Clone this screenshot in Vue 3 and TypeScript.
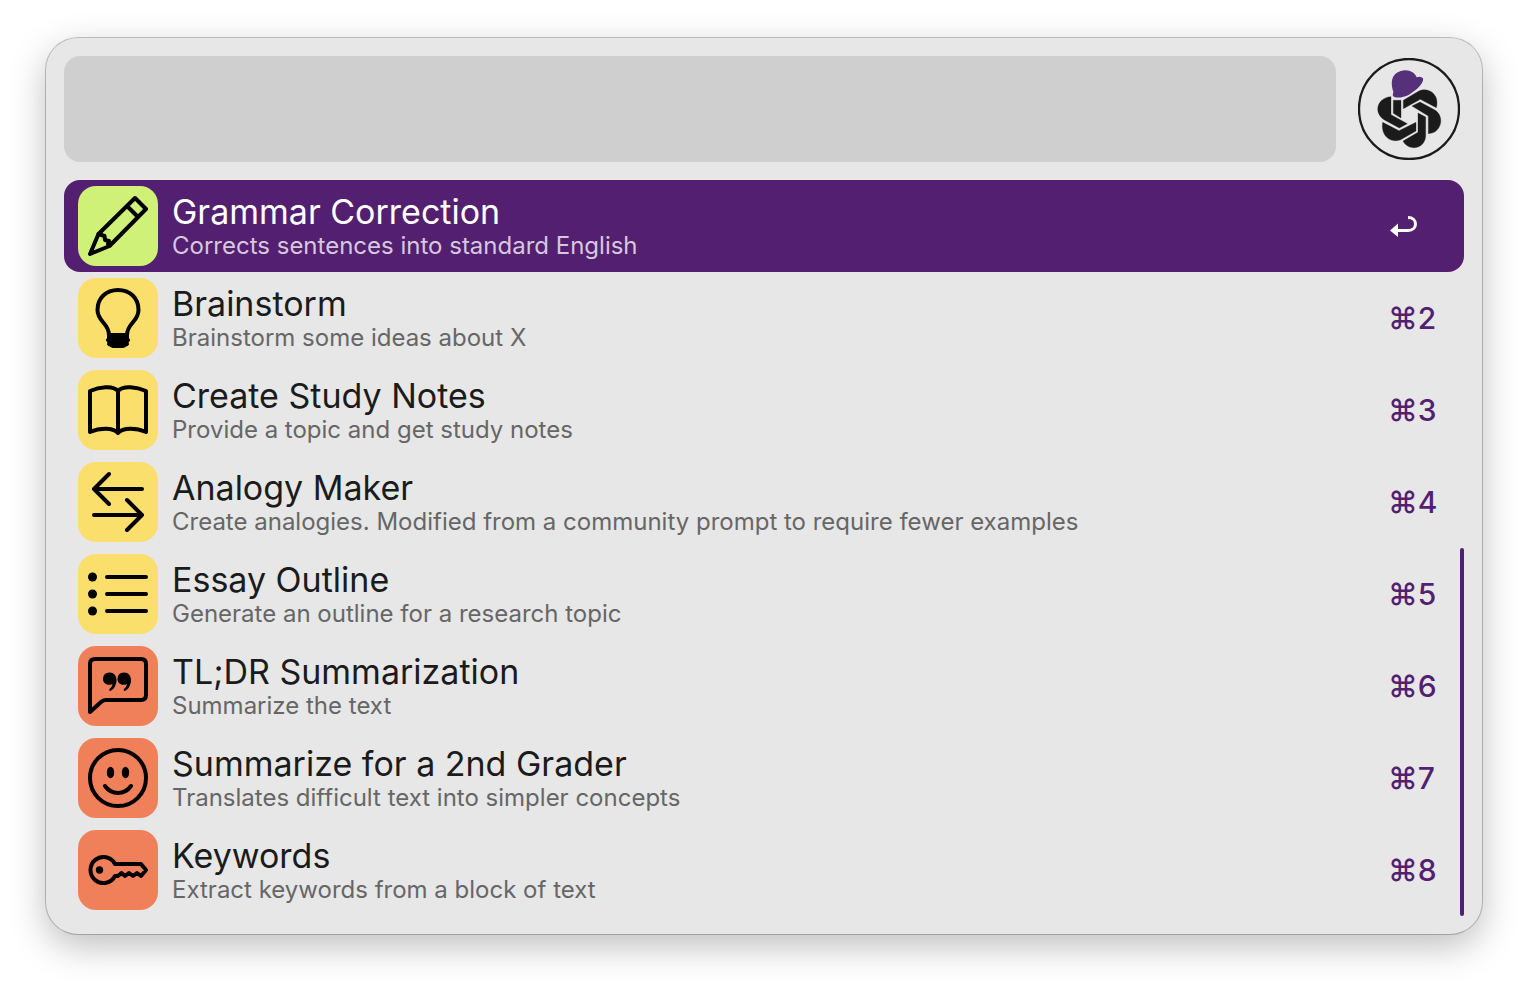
<script setup lang="ts">
import { ref } from 'vue'

type Icon = 'pencil' | 'bulb' | 'book' | 'arrows' | 'list' | 'quote' | 'smile' | 'key'
interface Item { title: string; subtitle: string; icon: Icon; tone: 'green' | 'yellow' | 'orange'; key: string }

const query = ref('')
const selected = ref(0)
const items: Item[] = [
  { title: 'Grammar Correction', subtitle: 'Corrects sentences into standard English', icon: 'pencil', tone: 'green', key: '⌘1' },
  { title: 'Brainstorm', subtitle: 'Brainstorm some ideas about X', icon: 'bulb', tone: 'yellow', key: '⌘2' },
  { title: 'Create Study Notes', subtitle: 'Provide a topic and get study notes', icon: 'book', tone: 'yellow', key: '⌘3' },
  { title: 'Analogy Maker', subtitle: 'Create analogies. Modified from a community prompt to require fewer examples', icon: 'arrows', tone: 'yellow', key: '⌘4' },
  { title: 'Essay Outline', subtitle: 'Generate an outline for a research topic', icon: 'list', tone: 'yellow', key: '⌘5' },
  { title: 'TL;DR Summarization', subtitle: 'Summarize the text', icon: 'quote', tone: 'orange', key: '⌘6' },
  { title: 'Summarize for a 2nd Grader', subtitle: 'Translates difficult text into simpler concepts', icon: 'smile', tone: 'orange', key: '⌘7' },
  { title: 'Keywords', subtitle: 'Extract keywords from a block of text', icon: 'key', tone: 'orange', key: '⌘8' },
]
</script>

<template>
  <main class="stage">
    <section class="panel">
      <header class="header">
        <input v-model="query" class="search" type="text" aria-label="Search">
        <svg class="logo" viewBox="54 54 306 306" aria-hidden="true">
          <circle cx="207" cy="207" r="150" fill="none" stroke="#1b1b1b" stroke-width="7" />
          <g fill="#1b1b1b" stroke="#1b1b1b" stroke-width="1">
            <path d="M190 181L233 155C260 140 291 158 291 188Q291 196 289 203L241 178L190 206Z" />
            <path d="M216 198L240 186L286 211C315 231 304 280 265 281V228Z" />
            <path d="M234 219L257 231V287C255 329 205 334 189 303L234 277Z" />
            <path d="M228 247V273L182 299C150 312 121 285 128 247L177 272Z" />
            <path d="M202 251L178 264L132 239C100 218 111 173 153 170V224Z" />
            <path d="M160 181H183V234L160 220Z" />
          </g>
          <path d="M158 150C149 116 162 94 193 91C212 90 225 99 230 112Q242 107 249 115C253 128 230 151 207 164C190 173 166 176 159 168C157 160 163 155 158 150Z" fill="#57307a" />
        </svg>
      </header>
      <div class="results">
        <ul class="list">
          <li v-for="(item, i) in items" :key="item.key">
            <button type="button" class="row" :class="{ active: i === selected }" @click="selected = i">
              <span class="tile" :class="item.tone">
                <svg viewBox="0 0 80 80" fill="none" stroke="#000" stroke-width="4" stroke-linecap="round" stroke-linejoin="round" aria-hidden="true">
                  <g v-if="item.icon === 'pencil'">
                    <path d="M12 68L20.500 48L57 12L68 23L31.500 60ZM49 20L60 31" />
                    <path d="M20.500 48L26.500 50L27 54L31 55L30 58" />
                  </g>
                  <g v-else-if="item.icon === 'bulb'">
                    <path d="M31 57C31 45 19.500 44 19.500 32C19.500 20 28 12 40 12S60.500 20 60.500 32C60.500 44 49 45 49 57" />
                    <path d="M31 57H49V61L50 62L48 64L49 66L45 68H35L31 66L32 64L30 62L31 61Z" fill="#000" />
                  </g>
                  <path v-else-if="item.icon === 'book'" d="M40 63C35 57 21 58 12 62V21C21 17 35 15 40 21V63C45 57 59 58 68 62V21C59 17 45 15 40 21" />
                  <path v-else-if="item.icon === 'arrows'" d="M64 27H16M31 12L16 27L31 42M16 53H64M49 38L64 53L49 68" />
                  <g v-else-if="item.icon === 'list'">
                    <path d="M29 23H68M29 40H68M29 57H68" />
                    <g fill="#000" stroke="none"><circle cx="14.500" cy="23" r="4.500" /><circle cx="14.500" cy="40" r="4.500" /><circle cx="14.500" cy="57" r="4.500" /></g>
                  </g>
                  <g v-else-if="item.icon === 'quote'">
                    <path d="M12 66V18Q12 13 17 13H63Q68 13 68 18V49Q68 54 63 54H28Q25 54 23 56Z" />
                    <g fill="#000" stroke="none">
                      <path d="M31.500 26.500C36 26.500 38.500 30 38.500 34C38.500 40 35 44 32 45Q30.500 44.500 31.500 43Q34 41 34.500 38C29 40.500 25 37 25 33Q25 26.500 31.500 26.500Z" />
                      <path d="M46 26.500C50.500 26.500 53 30 53 34C53 40 49.500 44 46.500 45Q45 44.500 46 43Q48.500 41 49 38C43.500 40.500 39.500 37 39.500 33Q39.500 26.500 46 26.500Z" />
                    </g>
                  </g>
                  <g v-else-if="item.icon === 'smile'">
                    <circle cx="40" cy="40" r="28" />
                    <path d="M27 48Q32 55 40 55T53 48" />
                    <g fill="#000" stroke="none"><ellipse cx="32.500" cy="34.500" rx="3.700" ry="5.700" /><ellipse cx="47.500" cy="34.500" rx="3.700" ry="5.700" /></g>
                  </g>
                  <g v-else>
                    <path d="M37 34A13 13 0 1 0 37 46H40L43.500 43L47 46L51 43L55 46L59 43L63 46L68 40L63 34Z" />
                    <circle cx="21.500" cy="40" r="3.700" fill="#000" stroke="none" />
                  </g>
                </svg>
              </span>
              <span class="text">
                <span class="title">{{ item.title }}</span>
                <span class="subtitle">{{ item.subtitle }}</span>
              </span>
              <span class="shortcut">
                <svg v-if="i === selected" class="return" viewBox="0 0 30 22" aria-label="Return">
                  <path d="M20 2.500C30 2.500 30 15.500 20 15.500H9" fill="none" stroke="#fff" stroke-width="3" />
                  <path d="M2 15.500L10 8.500V22Z" fill="#fff" />
                </svg>
                <template v-else>{{ item.key }}</template>
              </span>
            </button>
          </li>
        </ul>
        <div class="scrollbar" />
      </div>
    </section>
  </main>
</template>

<style>
body { margin: 0; background: #fff; }
</style>

<style scoped>
.stage { padding: 38px 46px 54px; font-family: Inter, "Liberation Sans", sans-serif; }
.panel {
  padding: 18px;
  border-radius: 32px;
  background: #e7e7e7;
  box-shadow: 0 0 0 1px rgba(0, 0, 0, 0.22), 0 12px 36px rgba(0, 0, 0, 0.26);
}
.header { display: flex; align-items: center; gap: 22px; padding-right: 4px; margin-bottom: 18px; }
.search {
  flex: 1;
  min-width: 0;
  height: 106px;
  box-sizing: border-box;
  padding: 0 24px;
  border: 0;
  border-radius: 16px;
  outline: none;
  background: #cfcfcf;
  color: #1b1b1b;
  font: inherit;
  font-size: 48px;
}
.logo { width: 102px; height: 102px; flex: none; }
.results { display: grid; grid-template-columns: minmax(0, 1fr); }
.list { grid-area: 1 / 1; margin: 0; padding: 0; list-style: none; }
.row {
  display: flex;
  align-items: center;
  gap: 14px;
  width: 100%;
  height: 92px;
  padding: 0 14px;
  border: 0;
  border-radius: 16px;
  background: none;
  color: #1b1b1b;
  font: inherit;
  text-align: left;
}
.tile { flex: none; width: 80px; height: 80px; border-radius: 18px; }
.tile svg { display: block; }
.green { background: #d0f178; }
.yellow { background: #fadf6d; }
.orange { background: #f0805a; }
.text { flex: 1; min-width: 0; display: flex; flex-direction: column; }
.title { font-size: 34px; line-height: 40px; white-space: nowrap; }
.subtitle { font-size: 24px; line-height: 28px; color: #666; white-space: nowrap; }
.shortcut { flex: none; width: 62px; color: #531f70; font-size: 30px; line-height: 40px; font-weight: 500; }
.return { display: block; width: 30px; height: 22px; }
.active { background: #531f70; color: #fff; }
.active .subtitle { color: #d6c8de; }
.scrollbar { grid-area: 1 / 1; place-self: end; width: 4px; height: 50%; border-radius: 2px; background: #531f70; }
</style>
